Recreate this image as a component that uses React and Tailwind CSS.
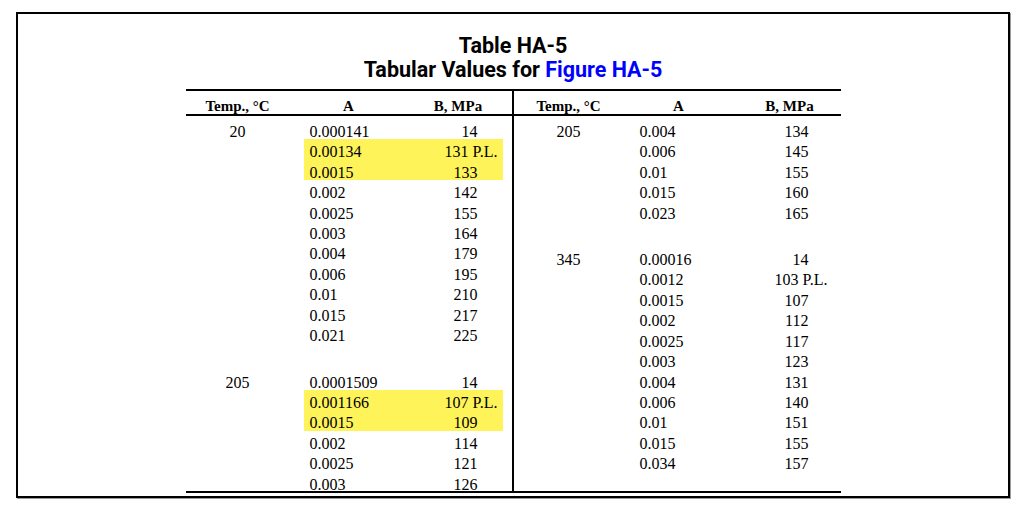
import React from 'react';

const leftBlocks = [
  {
    temp: '20',
    rows: [
      ['0.000141', '14'],
      ['0.00134', '131 P.L.', true],
      ['0.0015', '133', true],
      ['0.002', '142'],
      ['0.0025', '155'],
      ['0.003', '164'],
      ['0.004', '179'],
      ['0.006', '195'],
      ['0.01', '210'],
      ['0.015', '217'],
      ['0.021', '225'],
    ],
  },
  {
    temp: '205',
    rows: [
      ['0.0001509', '14'],
      ['0.001166', '107 P.L.', true],
      ['0.0015', '109', true],
      ['0.002', '114'],
      ['0.0025', '121'],
      ['0.003', '126'],
    ],
  },
];

const rightBlocks = [
  {
    temp: '205',
    rows: [
      ['0.004', '134'],
      ['0.006', '145'],
      ['0.01', '155'],
      ['0.015', '160'],
      ['0.023', '165'],
    ],
  },
  {
    temp: '345',
    rows: [
      ['0.00016', '14'],
      ['0.0012', '103 P.L.'],
      ['0.0015', '107'],
      ['0.002', '112'],
      ['0.0025', '117'],
      ['0.003', '123'],
      ['0.004', '131'],
      ['0.006', '140'],
      ['0.01', '151'],
      ['0.015', '155'],
      ['0.034', '157'],
    ],
  },
];

const serif = { fontFamily: '"Liberation Serif", serif' };

function LeftRows() {
  return leftBlocks.map((block, bi) => (
    <div key={bi} className={bi > 0 ? 'mt-[26px]' : ''}>
      {block.rows.map(([a, b, hl], i) => {
        const pl = b.includes('P.L.');
        return (
          <div key={i} className="grid grid-cols-[118px_110px_89px] h-[20.45px] text-[16px] leading-[15px]">
            <div className="text-center pr-[14px] pt-[5.2px]">{i === 0 ? block.temp : ''}</div>
            <div className={`pl-[6px] pt-[5.2px] ${hl ? 'bg-[#fff35a]' : ''}`}>{a}</div>
            <div className={`text-right pt-[5.2px] whitespace-nowrap ${pl ? 'pr-[5px]' : 'pr-[25px]'} ${hl ? 'bg-[#fff35a]' : ''}`}>{b}</div>
          </div>
        );
      })}
    </div>
  ));
}

function RightRows() {
  return rightBlocks.map((block, bi) => (
    <div key={bi} className={bi > 0 ? 'mt-[26px]' : ''}>
      {block.rows.map(([a, b], i) => {
        const pl = b.includes('P.L.');
        return (
          <div key={i} className="grid grid-cols-[120px_100px_107px] h-[20.45px] text-[16px] leading-[15px]">
            <div className="text-center pr-[10px] pt-[5.2px]">{i === 0 ? block.temp : ''}</div>
            <div className="pl-[6px] pt-[5.2px]">{a}</div>
            <div className={`text-right pt-[5.2px] whitespace-nowrap ${pl ? 'pr-[13px]' : 'pr-[32px]'}`}>{b}</div>
          </div>
        );
      })}
    </div>
  ));
}

export default function App() {
  return (
    <div className="bg-white w-[1027px] h-[511px] pt-[12px] pl-[16px]">
      <div className="w-[994px] h-[486px] border-2 border-black shadow-[1px_1px_0_#9a9a9a] flex flex-col items-center text-black">
        <div
          className="pt-[20px] text-center font-bold text-[21.5px] leading-[23.5px]"
          style={{ fontFamily: 'Roboto, sans-serif' }}
        >
          <div>Table HA-5</div>
          <div>
            Tabular Values for <span className="text-[#0000ff]">Figure HA-5</span>
          </div>
        </div>

        <div className="mt-[8px] w-[655px] border-t-2 border-b-2 border-black flex" style={serif}>
          <div className="w-[328px] border-r-2 border-black">
            <div className="grid grid-cols-[118px_110px_89px] h-[25px] border-b-2 border-black font-bold text-[15px] leading-[18px]">
              <div className="text-center pr-[14px] pt-[5.5px]">Temp., °C</div>
              <div className="text-center pr-[20px] pt-[5.5px]">A</div>
              <div className="text-center pt-[5.5px]">B, MPa</div>
            </div>
            <div className="h-[375px] pt-[2.6px]">
              <LeftRows />
            </div>
          </div>
          <div className="w-[327px]">
            <div className="grid grid-cols-[120px_100px_107px] h-[25px] border-b-2 border-black font-bold text-[15px] leading-[18px]">
              <div className="text-center pr-[10px] pt-[5.5px]">Temp., °C</div>
              <div className="text-center pr-[10px] pt-[5.5px]">A</div>
              <div className="text-center pl-[5px] pt-[5.5px]">B, MPa</div>
            </div>
            <div className="h-[375px] pt-[2.6px]">
              <RightRows />
            </div>
          </div>
        </div>
      </div>
    </div>
  );
}
